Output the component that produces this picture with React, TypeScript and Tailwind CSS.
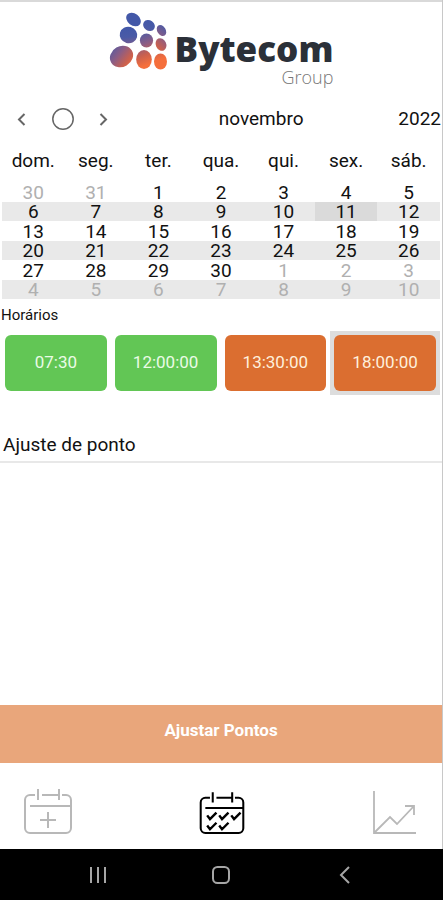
import React from "react";

const weekdays = ["dom.", "seg.", "ter.", "qua.", "qui.", "sex.", "sáb."];
const weeks = [
  [30, 31, 1, 2, 3, 4, 5],
  [6, 7, 8, 9, 10, 11, 12],
  [13, 14, 15, 16, 17, 18, 19],
  [20, 21, 22, 23, 24, 25, 26],
  [27, 28, 29, 30, 1, 2, 3],
  [4, 5, 6, 7, 8, 9, 10],
];
const times = [
  { label: "07:30", done: true, selected: false },
  { label: "12:00:00", done: true, selected: false },
  { label: "13:30:00", done: false, selected: false },
  { label: "18:00:00", done: false, selected: true },
];

function isOutside(week: number, day: number) {
  return (week === 0 && day > 20) || (week > 3 && day < 20);
}

function Logo() {
  return (
    <header className="flex h-[91px] justify-center border-t-2 border-[#d9d9d9] pt-2">
      <svg className="h-[62px] w-[60px]" viewBox="108 10 60 62" aria-hidden="true">
        <defs>
          <linearGradient id="dots" gradientUnits="userSpaceOnUse" x1="128" y1="28" x2="143" y2="66">
            <stop offset="0" stopColor="#4358a8" />
            <stop offset="0.2" stopColor="#4a5aa6" />
            <stop offset="0.5" stopColor="#8b5d85" />
            <stop offset="0.75" stopColor="#c9604f" />
            <stop offset="1" stopColor="#f56f3c" />
          </linearGradient>
        </defs>
        <g fill="url(#dots)">
          <ellipse cx="132.500" cy="19.500" rx="8" ry="6" transform="rotate(38 132.5 19.5)" />
          <ellipse cx="148" cy="25.500" rx="6.200" ry="5.200" transform="rotate(35 148 25.5)" />
          <ellipse cx="160.500" cy="30.500" rx="6" ry="4.200" transform="rotate(58 160.5 30.5)" />
          <ellipse cx="127.500" cy="35" rx="8.800" ry="8.200" transform="rotate(15 127.5 35)" />
          <ellipse cx="145.500" cy="40.500" rx="6.600" ry="7" />
          <ellipse cx="160" cy="44.500" rx="6.500" ry="5.200" transform="rotate(65 160 44.5)" />
          <ellipse cx="120.500" cy="56.500" rx="12" ry="10.300" transform="rotate(-30 120.5 56.5)" />
          <ellipse cx="143" cy="59.500" rx="7.800" ry="9.500" />
          <ellipse cx="159.500" cy="61.500" rx="6.500" ry="8" />
        </g>
      </svg>
      <div className="flex flex-col items-end pt-[21px] pl-1.5 font-['Open_Sans',sans-serif]">
        <span className="text-[35px] leading-9 font-extrabold text-[#2b3038]">Bytecom</span>
        <span className="text-lg leading-5 font-light text-[#777777]">Group</span>
      </div>
    </header>
  );
}

function Calendar() {
  return (
    <section className="pr-px" aria-label="Calendário">
      <div className="flex h-14 items-center">
        <div className="flex items-center gap-5 pr-2 pl-3">
          <button type="button" aria-label="Mês anterior" className="text-[#666666]">
            <svg className="h-5 w-5" viewBox="0 0 20 20" fill="none" stroke="currentColor" strokeWidth="2">
              <path d="M12.500 5 7 10.500l5.500 5.500" />
            </svg>
          </button>
          <button type="button" aria-label="Hoje" className="text-[#666666]">
            <svg className="h-6 w-6" viewBox="0 0 24 24" fill="none" stroke="currentColor" strokeWidth="1.500">
              <circle cx="11" cy="12" r="10.200" />
            </svg>
          </button>
          <button type="button" aria-label="Próximo mês" className="text-[#666666]">
            <svg className="h-5 w-5" viewBox="0 0 20 20" fill="none" stroke="currentColor" strokeWidth="2">
              <path d="M4.500 5l5.500 5.500L4.500 16" />
            </svg>
          </button>
        </div>
        <span className="flex-1 text-center">novembro</span>
        <span>2022</span>
      </div>
      <div className="pr-px pl-0.5">
        <table className="w-full table-fixed border-collapse text-center">
          <thead>
            <tr className="h-[35px]">
              {weekdays.map((name) => (
                <th key={name} scope="col" className="p-0 pb-2 leading-5 font-normal">{name}</th>
              ))}
            </tr>
          </thead>
          <tbody>
            {weeks.map((days, week) => (
              <tr key={week} className="odd:h-5 even:h-[19px] even:bg-[#e9e9e9]">
                {days.map((day) => (
                  <td
                    key={day}
                    className={`p-0 leading-[19px] ${isOutside(week, day) ? "text-[#b0b0b0]" : "text-[#111111]"} ${week === 1 && day === 11 ? "bg-[#dadada]" : ""}`}
                  >
                    {day}
                  </td>
                ))}
              </tr>
            ))}
          </tbody>
        </table>
      </div>
    </section>
  );
}

function CalendarFrame() {
  return <path d="M14 7H9a5 5 0 0 0-5 5v28a5 5 0 0 0 5 5h36a5 5 0 0 0 5-5V12a5 5 0 0 0-5-5h-4M21 7h16M17 1v11M38 1v11M9 18h41" />;
}

export default function App() {
  return (
    <div className="flex min-h-screen flex-col bg-white font-['Roboto',sans-serif] text-[19px] text-[#111111]">
      <main className="flex flex-1 flex-col border-r border-[#c8c8c8]">
        <Logo />
        <Calendar />
        <section aria-labelledby="times">
          <h2 id="times" className="pt-1 pb-1 pl-px text-[15px] leading-6">Horários</h2>
          <div className="grid grid-cols-4 pr-0.5 pl-px">
            {times.map((time) => (
              <div key={time.label} className={`p-1 ${time.selected ? "bg-[#dddddd]" : ""}`}>
                <button
                  type="button"
                  className={`h-14 w-full rounded-md text-[17px] ${time.done ? "bg-[#62c655] text-[#eafbe6]" : "bg-[#db6e30] text-[#fff0dc]"}`}
                >
                  {time.label}
                </button>
              </div>
            ))}
          </div>
        </section>
        <h2 className="mt-8 border-b-2 border-[#e8e8e8] pt-1 pb-0.5 pl-[3px] leading-7">Ajuste de ponto</h2>
        <div className="flex-1" />
        <button type="button" className="h-[58px] w-full bg-[#e9a67b] pb-1.5 text-[17px] font-bold text-white">
          Ajustar Pontos
        </button>
        <nav className="flex h-[86px] items-center justify-between pt-3 pr-5 pl-[21px]" aria-label="Principal">
          <button type="button" aria-label="Adicionar ponto" className="flex w-[54px] justify-center text-[#b8b8b8]">
            <svg className="h-12 w-[54px]" viewBox="0 0 54 48" fill="none" stroke="currentColor" strokeWidth="2">
              <CalendarFrame />
              <path d="M27 24v16M19 32h16" />
            </svg>
          </button>
          <button type="button" aria-label="Ajustar pontos" className="flex w-[54px] justify-center pt-0.5 text-black">
            <svg className="h-[45px] w-[50px]" viewBox="0 0 54 48" fill="none" stroke="currentColor" strokeWidth="2.200">
              <CalendarFrame />
              <path d="m11 26 3 4 7-7M24 26l3 4 7-7M37 26l3 4 7-7M11 37l3 4 7-7M24 37l3 4 7-7" strokeWidth="2.600" />
            </svg>
          </button>
          <button type="button" aria-label="Relatórios" className="flex w-[54px] justify-center text-[#b8b8b8]">
            <svg className="h-12 w-12" viewBox="0 0 48 48" fill="none" stroke="currentColor" strokeWidth="1.800">
              <path d="M3 3v42h42M3 45l16-16 7 7 17-18M34 18h9v9" />
            </svg>
          </button>
        </nav>
      </main>
      <footer className="flex h-[51px] items-center justify-around bg-black px-9 text-[#a6a6a6]">
        <button type="button" aria-label="Recentes">
          <svg className="h-5 w-5" viewBox="0 0 20 20" fill="none" stroke="currentColor" strokeWidth="2">
            <path d="M3 2v16M10 2v16M17 2v16" />
          </svg>
        </button>
        <button type="button" aria-label="Início">
          <svg className="h-5 w-5" viewBox="0 0 20 20" fill="none" stroke="currentColor" strokeWidth="2">
            <rect x="2" y="2" width="16" height="16" rx="4.500" />
          </svg>
        </button>
        <button type="button" aria-label="Voltar">
          <svg className="h-5 w-5" viewBox="0 0 20 20" fill="none" stroke="currentColor" strokeWidth="2">
            <path d="M14 2 6 10l8 8" />
          </svg>
        </button>
      </footer>
    </div>
  );
}
